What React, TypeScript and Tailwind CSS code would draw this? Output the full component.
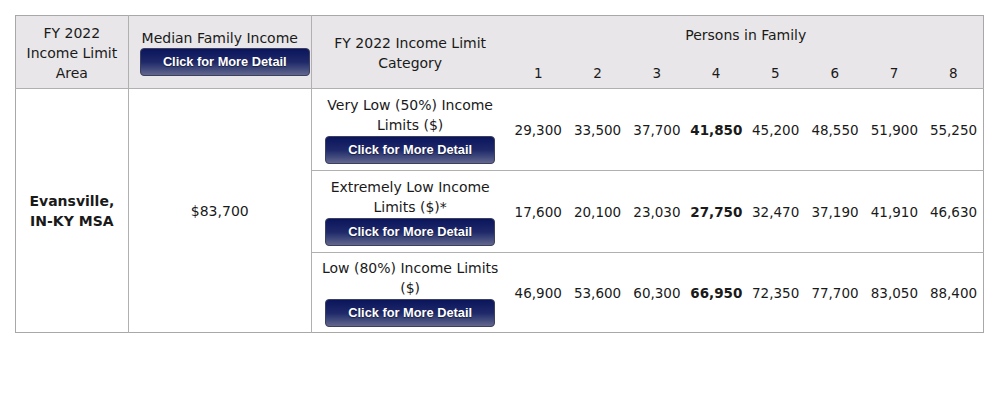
const persons = [1, 2, 3, 4, 5, 6, 7, 8];

const rows = [
  {
    label: ["Very Low (50%) Income", "Limits ($)"],
    values: ["29,300", "33,500", "37,700", "41,850", "45,200", "48,550", "51,900", "55,250"],
  },
  {
    label: ["Extremely Low Income", "Limits ($)*"],
    values: ["17,600", "20,100", "23,030", "27,750", "32,470", "37,190", "41,910", "46,630"],
  },
  {
    label: ["Low (80%) Income Limits", "($)"],
    values: ["46,900", "53,600", "60,300", "66,950", "72,350", "77,700", "83,050", "88,400"],
  },
];

function DetailButton() {
  return (
    <button className="h-[28px] w-[170px] rounded-[4px] border border-[#3c3f5e] bg-gradient-to-b from-[#0b155c] via-[#1f2869] to-[#63678c] font-['Liberation_Sans',Arial,sans-serif] text-[12.8px] font-bold leading-[20px] text-white [text-shadow:0_1px_1px_rgba(0,0,0,0.5)]">
      Click for More Detail
    </button>
  );
}

export default function App() {
  return (
    <div className="min-h-screen bg-white px-[15px] pt-[15px] font-['DejaVu_Sans',Verdana,sans-serif] text-[14px] leading-[20px] text-[#1a1a1a]">
      <table className="w-[969px] border-collapse border border-[#a8a8a8]">
        <thead>
          <tr className="h-[73px] bg-[#e8e6e8]">
            <th className="w-[112px] border-r border-[#b0b0b0] p-0 pt-[1px] font-normal">
              FY 2022
              <br />
              Income Limit
              <br />
              Area
            </th>
            <th className="w-[182px] border-r border-[#b0b0b0] p-0 align-middle font-normal">
              <div className="flex flex-col items-center">
                <span>Median Family Income</span>
                <div className="pl-[10px]">
                  <DetailButton />
                </div>
              </div>
            </th>
            <th className="w-[196px] p-0 pt-[1px] font-normal">
              FY 2022 Income Limit
              <br />
              Category
            </th>
            <th colSpan={8} className="p-0 pt-[3px] font-normal">
              <div className="pb-[18px]">Persons in Family</div>
              <div className="grid grid-cols-8 text-[13.5px]">
                {persons.map((n) => (
                  <span key={n}>{n}</span>
                ))}
              </div>
            </th>
          </tr>
        </thead>
        <tbody>
          {rows.map((row, i) => (
            <tr key={i} className={`${i === 2 ? "h-[80px]" : "h-[82px]"} border-t border-[#b0b0b0]`}>
              {i === 0 && (
                <>
                  <td rowSpan={3} className="border-r border-[#b0b0b0] text-center font-bold">
                    Evansville,
                    <br />
                    IN-KY MSA
                  </td>
                  <td rowSpan={3} className="border-r border-[#b0b0b0] text-center">
                    $83,700
                  </td>
                </>
              )}
              <td className="p-0 text-center">
                <div className="flex flex-col items-center">
                  <span>{row.label[0]}</span>
                  <span>{row.label[1]}</span>
                  <div className="pt-[1px]">
                    <DetailButton />
                  </div>
                </div>
              </td>
              {row.values.map((v, j) => (
                <td
                  key={j}
                  className={`w-[59px] p-0 text-center text-[13.5px] ${j === 3 ? "font-bold" : ""}`}
                >
                  {v}
                </td>
              ))}
            </tr>
          ))}
        </tbody>
      </table>
    </div>
  );
}
